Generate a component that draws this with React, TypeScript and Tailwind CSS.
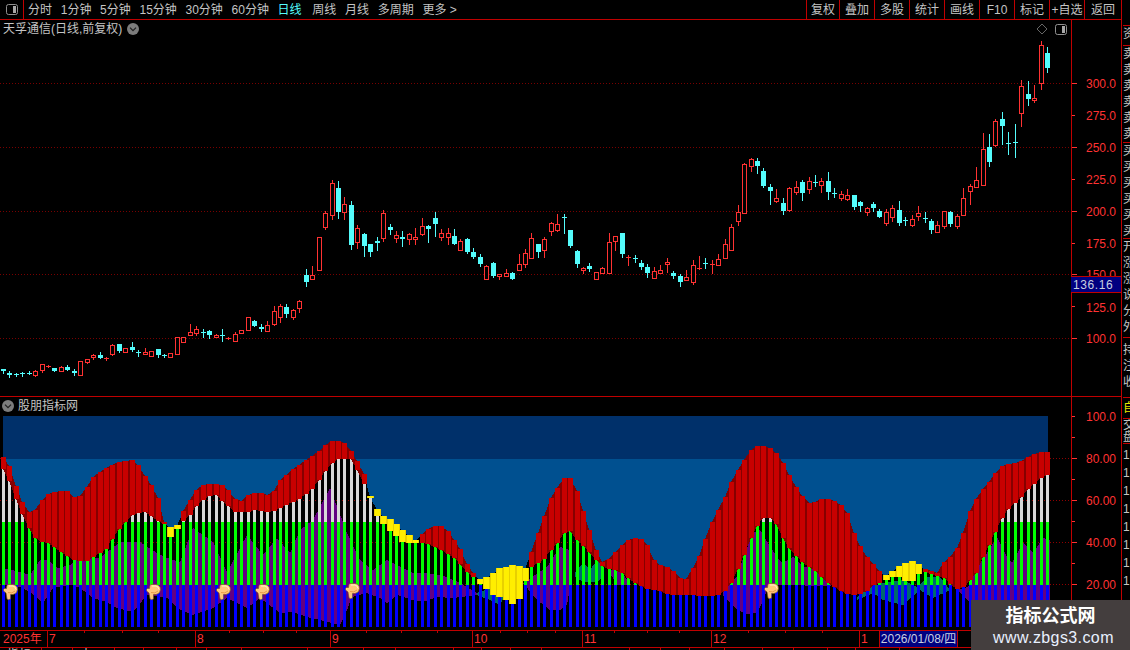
const RED = "#ff3232";
const CYAN = "#54fcfc";
const LINE = "border-[#c00000]";

type Pt = [number, number];

const xOf = (i: number) => Math.floor(3.4 + 6.445 * i);
// values below were read off 3x crops, so they go through this
const zm = (x0: number, y0: number, pts: number[][]): Pt[] =>
  pts.map(([x, y]) => [x0 + x / 3, y0 + y / 3]);

// wick top, body top, body bottom, wick bottom, 1 = up candle
const candleSets: [number, number[][]][] = [
  [300, [
    [207,207,213,219,0],[213,219,225,231,0],[219,222,225,228,0],[216,219,222,228,0],[213,219,220,222,0],
    [210,214,224,228,1],[192,193,209,216,1],[195,198,200,201,1],[204,204,213,213,0],[198,202,212,213,1],
    [195,201,210,210,0],[207,213,219,225,0],[183,184,224,225,1],[177,178,185,189,1],[162,165,171,177,1],
    [156,165,174,174,0],[171,175,178,180,1],[132,136,161,165,1],[132,132,153,156,0],[144,145,155,156,1],
    [126,141,150,153,0],[150,156,159,168,0],[144,156,161,162,1],[153,154,167,168,1],[147,147,165,171,0],
    [162,165,168,171,0],[159,160,170,171,1],[111,112,161,162,1],[111,112,125,126,1],[72,97,104,105,1],
    [78,88,98,105,1],[87,96,99,111,0],[90,93,105,114,0],[102,105,110,111,1],[87,105,108,123,0],
    [111,114,117,117,1],[96,103,122,123,1],[90,91,98,99,1],[51,52,89,90,1],[60,63,78,78,0],
    [72,81,87,93,0],[63,76,92,93,1],[18,34,71,75,1],[12,19,50,66,1],[12,21,42,51,0],
    [27,31,50,57,1],[0,4,23,36,1],
  ]],
  [170, [
    [297,315,335,347,0],[288,316,326,327,1],[202,202,299,299,1],[124,130,172,178,1],[30,40,134,147,1],
    [33,54,126,144,0],[82,103,127,147,1],[93,105,224,237,0],[165,175,215,234,1],[189,192,228,258,0],
    [222,222,246,258,0],[201,213,219,240,0],[120,130,203,213,1],[162,171,180,192,0],[183,195,203,216,1],
    [183,201,207,228,0],[189,193,208,222,1],[174,202,208,222,1],[144,169,191,195,1],[165,168,177,216,0],
    [126,144,162,198,0],[177,190,200,210,1],[174,190,200,222,1],[177,198,222,222,0],[207,214,239,240,1],
    [204,207,246,249,0],[234,246,261,264,0],[252,261,282,288,0],[285,289,326,327,1],[276,279,318,321,0],
    [312,312,318,327,1],[297,309,317,318,1],[306,309,327,327,0],[252,283,299,300,1],[237,250,281,291,1],
    [189,205,263,264,1],[222,222,246,261,0],[201,208,239,261,1],[156,160,182,195,1],[132,163,179,183,1],
    [132,141,144,189,0],[180,180,228,231,0],[240,243,282,291,0],[291,294,300,309,1],[279,288,297,303,0],
    [306,307,326,327,1],
  ]],
  [150, [
    [351,355,368,369,1],[249,277,368,369,1],[258,259,272,300,1],[249,249,312,321,0],[315,321,323,345,1],
    [315,324,327,336,0],[330,339,351,357,0],[342,351,369,381,0],[351,364,383,384,1],[345,361,368,369,1],
    [324,336,342,366,1],[363,369,378,384,0],[372,378,396,408,0],[360,382,389,390,1],[330,346,395,402,1],
    [318,354,356,357,1],[324,339,342,354,0],[330,342,344,369,1],[312,328,344,345,1],[267,283,323,324,1],
    [222,232,299,300,1],[165,187,212,225,1],[40,43,188,189,1],[24,27,47,63,1],[24,33,48,69,0],
    [54,63,108,111,0],[102,111,123,162,0],[117,145,153,156,1],[144,159,183,192,0],[111,115,179,184,1],
    [93,112,125,132,1],[90,96,129,150,0],[81,94,116,129,1],[75,96,99,108,0],[84,94,104,126,1],
    [66,93,126,147,0],[114,129,132,141,0],[123,133,143,150,1],[117,136,146,150,1],[135,135,171,177,0],
    [153,156,168,183,0],[171,175,185,195,1],[156,162,174,183,0],[177,183,201,201,0],
  ]],
  [40, [
    [507,517,548,555,1],[495,505,530,543,1],[483,510,549,555,0],[531,540,543,555,0],[525,538,554,558,1],
    [498,520,527,540,1],[516,534,537,546,0],[537,543,570,579,0],[543,556,575,576,1],[513,514,557,564,1],
    [513,516,552,558,0],[522,529,557,564,1],[444,475,524,525,1],[432,439,452,492,1],[381,421,440,441,1],
    [279,328,434,435,1],[282,321,366,378,0],[237,244,314,318,1],[216,237,258,312,0],[276,309,312,342,0],
    [252,306,309,351,0],[120,139,218,258,1],[123,162,177,195,0],[135,175,181,186,1],[3,16,130,147,1],
    [21,39,84,96,0],
  ]],
];

const candles = candleSets.flatMap(([y0, rows]) =>
  rows.map((r) => ({
    hi: Math.round(y0 + r[0] / 3),
    top: Math.round(y0 + r[1] / 3),
    bot: Math.round(y0 + r[2] / 3),
    lo: Math.round(y0 + r[3] / 3),
    up: r[4] === 1,
  }))
);

const topCurve: Pt[] = [
  ...zm(0, 395, [[0,185],[20,190],[30,222],[45,265],[60,310],[80,350],[100,350],[115,335],[135,300],[175,287],[210,290],[225,310],[250,300],[270,255],[290,237],[330,212],[365,197],[405,195],[430,235],[460,280],[480,322],[490,380],[500,388],[540,360],[560,335],[580,295],[600,272],[640,265],[675,270],[700,310],[720,322],[740,300],[770,292],[800,300],[820,290],[839,258]]),
  ...zm(280, 420, [[0,180],[30,155],[70,125],[110,100],[145,63],[185,63],[215,95],[235,130],[260,175],[265,215],[418,348],[455,318],[495,318],[515,350],[535,378],[555,420],[575,455],[590,470],[748,410],[765,360],[785,310],[805,250],[825,210],[839,195]]),
  ...zm(560, 420, [[0,190],[5,172],[40,175],[65,260],[90,340],[120,425],[140,425],[160,400],[195,365],[215,353],[255,360],[275,410],[295,435],[330,445],[355,470],[375,483],[395,450],[415,415],[445,330],[465,285],[490,245],[505,200],[525,165],[545,130],[565,100],[585,77],[625,80],[660,110],[680,150],[700,190],[735,240],[755,257],[775,238],[810,235],[839,255]]),
  ...zm(840, 420, [[0,253],[15,258],[30,310],[55,370],[75,405],[110,445],[130,465],[245,450],[260,447],[280,455],[298,460],[305,430],[320,420],[345,395],[360,370],[380,298],[400,250],[420,215],[440,195],[460,165],[480,140],[500,132],[530,130],[550,118],[590,97],[630,97]]),
];

const botCurve: Pt[] = [
  ...zm(0, 395, [[0,205],[20,240],[40,290],[60,345],[80,385],[100,425],[120,440],[150,445],[180,470],[220,495],[260,500],[290,480],[320,460],[350,410],[370,385],[400,355],[440,352],[470,375],[490,388],[540,385],[570,360],[590,330],[620,305],[645,297],[680,330],[700,350],[740,353],[765,345],[800,350],[839,345]]),
  ...zm(280, 420, [[0,265],[30,250],[70,230],[100,205],[130,160],[165,117],[215,117],[240,170],[265,215],[418,366],[455,376],[495,395],[530,420],[555,450],[575,470],[590,475],[748,444],[790,420],[810,395],[839,360]]),
  ...zm(560, 420, [[0,380],[10,340],[30,333],[60,370],[90,400],[120,435],[140,445],[180,455],[220,485],[240,497],[260,508],[300,513],[330,525],[370,525],[415,527],[450,530],[490,520],[510,495],[530,455],[550,410],[570,360],[590,320],[610,293],[630,295],[650,315],[680,375],[720,420],[760,450],[800,485],[820,500],[839,510]]),
  ...zm(840, 420, [[0,510],[15,520],[40,525],[75,520],[95,497],[115,490],[130,480],[245,462],[260,455],[280,465],[300,470],[318,478],[335,498],[360,510],[385,488],[410,455],[430,410],[450,370],[470,325],[490,285],[510,260],[530,245],[560,210],[600,175],[630,160]]),
];

// yellow blocks: index -> top, bottom
const yellow: Record<number, Pt> = {
  26: [527, 537], 27: [525, 529], 57: [496, 498], 58: [509, 516], 59: [516, 524], 60: [519, 531],
  61: [524, 536], 62: [530, 542], 63: [535, 543], 64: [540, 543], 74: [579, 584], 75: [577, 589],
  76: [573, 595], 77: [568, 597], 78: [567, 600], 79: [565, 604], 80: [566, 599], 81: [568, 581],
  137: [575, 580], 138: [571, 577], 139: [566, 577], 140: [563, 581], 141: [561, 581], 142: [564, 574],
};
const redRanges: Pt[] = [[0, 25], [28, 56], [65, 73], [82, 136], [143, 162]];

function interp(curve: Pt[], x: number) {
  if (x <= curve[0][0]) return curve[0][1];
  for (let k = 1; k < curve.length; k++) {
    if (x <= curve[k][0]) {
      const [x0, y0] = curve[k - 1];
      const [x1, y1] = curve[k];
      return y0 + ((y1 - y0) * (x - x0)) / Math.max(x1 - x0, 0.01);
    }
  }
  return curve[curve.length - 1][1];
}

const cols = Array.from({ length: 163 }, (_, i) => {
  const cx = xOf(i);
  const y = yellow[i];
  return {
    i,
    cx,
    top: y ? y[0] : Math.round(interp(topCurve, cx)),
    bot: y ? y[1] : Math.round(interp(botCurve, cx)),
    isYellow: !!y,
  };
});

const purple: Pt[][] = [
  [[3,568],[20,572],[30,575],[40,560],[48,560],[58,568],[70,565],[78,558],[100,558],[120,542],[140,542],[157,553],[167,558],[180,562],[193,528],[213,542],[227,572],[247,535],[263,555],[277,538],[290,553],[300,530],[313,520],[330,488],[347,533],[360,560],[373,570],[387,560],[413,573],[427,573],[447,577],[460,583],[477,593],
   [477,595],[453,598],[437,597],[423,602],[413,600],[397,595],[387,603],[380,598],[367,593],[352,597],[347,610],[340,625],[320,620],[307,617],[293,612],[280,613],[260,598],[247,608],[227,598],[213,608],[193,615],[177,608],[167,598],[147,595],[133,612],[117,608],[107,602],[93,598],[80,588],[72,585],[53,588],[43,603],[30,592],[20,587],[3,585]],
  [[523,583],[547,567],[560,547],[570,550],[570,587],[567,605],[560,610],[550,610],[537,600]],
  [[610,570],[620,570],[627,580],[627,585],[617,585],[610,573]],
  [[723,593],[730,583],[737,577],[745,553],[753,533],[760,530],[768,543],[777,557],[782,563],[793,557],[803,567],[813,568],[827,583],[832,586],[777,585],[767,590],[762,603],[757,613],[747,614],[737,610],[723,595]],
  [[957,590],[968,587],[977,567],[987,553],[997,537],[1007,557],[1012,563],[1023,543],[1033,553],[1043,538],[1050,540],[1050,618],[990,615],[972,605],[967,600]],
];
const teal: Pt[][] = [
  [[477,593],[485,590],[495,587],[505,595],[500,605],[490,600],[477,595]],
  [[575,573],[583,563],[590,570],[597,560],[603,567],[603,577],[597,582],[583,582],[575,577]],
  [[857,597],[870,587],[883,583],[903,580],[917,587],[927,577],[940,577],[950,590],[933,598],[920,590],[903,605],[883,600],[873,593],[857,600]],
];
const poly = (pts: Pt[]) => pts.map((p) => p.join(",")).join(" ");

const hands: Pt[] = [[3, 584], [146, 584], [216, 584], [255, 584], [345, 583], [764, 583]];

function Hand({ x, y }: { x: number; y: number }) {
  return (
    <g transform={`translate(${x} ${y})`} shapeRendering="auto">
      <path
        d="M5 .5H10Q14.5 1 14.5 5.5Q14 10 10 10.5H7.5V15Q5.5 16.5 4 15L3 9L.5 7Q0 5 1.5 4.5H3.5Q3.5 1 5 .5Z"
        fill="#ffc67c"
        stroke="#6b4a20"
        strokeWidth=".6"
      />
      <path d="M6 2H10Q12.5 2.5 13 5.5" fill="none" stroke="#fff0d0" strokeWidth="1" />
      <path d="M5 8.5Q9 10 12 7" fill="none" stroke="#e89a48" strokeWidth="1" />
    </g>
  );
}

function PriceChart() {
  return (
    <svg width={1071} height={376} viewBox="0 20 1071 376" shapeRendering="crispEdges" className="block">
      {[83, 147, 211, 274, 338].map((y) => (
        <line key={y} x1={0} x2={1071} y1={y + 0.5} y2={y + 0.5} stroke="#780000" strokeDasharray="1 2" />
      ))}
      {candles.map((c, i) => {
        const cx = xOf(i);
        const color = c.up ? RED : CYAN;
        const h = c.bot - c.top;
        return (
          <g key={i}>
            <line x1={cx + 0.5} x2={cx + 0.5} y1={c.hi} y2={c.lo + 1} stroke={color} />
            {c.up && h >= 2 ? (
              <rect x={cx - 1.5} y={c.top + 0.5} width={4} height={h} fill="#000" stroke={color} />
            ) : (
              <rect x={cx - 2} y={c.top} width={5} height={Math.max(h, 1)} fill={color} />
            )}
          </g>
        );
      })}
    </svg>
  );
}

function IndicatorChart() {
  const bluePts: Pt[] = [
    [3, 459],
    [3, cols[0].top],
    ...cols.map((c): Pt => [c.cx, Math.max(c.top + 1, 459)]),
    [1048, cols[162].top],
    [1048, 459],
  ];
  return (
    <svg width={1071} height={233} viewBox="0 397 1071 233" shapeRendering="crispEdges" className="block">
      {[458, 500, 542, 584].map((y) => (
        <line key={y} x1={0} x2={1071} y1={y + 0.5} y2={y + 0.5} stroke="#900000" strokeDasharray="1 2" />
      ))}
      <rect x={3} y={416} width={1045} height={43} fill="#00306a" />
      <polygon points={poly(bluePts)} fill="#005090" />
      {purple.map((p, i) => (
        <polygon key={i} points={poly(p)} fill="#640082" />
      ))}
      {teal.map((p, i) => (
        <polygon key={i} points={poly(p)} fill="#006a6e" />
      ))}
      {cols.map((c) => {
        const g = Math.max(c.bot, 522);
        const b = Math.max(c.bot, 585);
        return (
          <g key={c.i}>
            {c.bot < 522 && <rect x={c.cx - 1} y={c.bot} width={3} height={522 - c.bot} fill="#d8d8d8" />}
            {g < 585 && <rect x={c.cx - 1} y={g} width={3} height={585 - g} fill="#00ff00" />}
            <rect x={c.cx - 1} y={b} width={3} height={627 - b} fill="#0000ff" />
          </g>
        );
      })}
      {redRanges.map(([a, b]) => {
        const seg = cols.slice(a, b + 1);
        const pts: Pt[] = [
          ...seg.map((c): Pt => [c.cx, c.top]),
          ...seg.slice().reverse().map((c): Pt => [c.cx, c.bot]),
        ];
        return <polygon key={a} points={poly(pts)} fill="#860000" />;
      })}
      {cols
        .filter((c) => redRanges.some(([a, b]) => c.i >= a && c.i <= b))
        .map((c) => (
          <rect key={c.i} x={c.cx - 2} y={c.top} width={5} height={Math.max(c.bot - c.top, 1)} fill="#c80000" />
        ))}
      {cols
        .filter((c) => c.isYellow)
        .map((c) => (
          <g key={c.i}>
            <rect x={c.cx - 3} y={c.top} width={7} height={c.bot - c.top} fill="#e8d000" />
            <rect x={c.cx - 2} y={c.top} width={5} height={c.bot - c.top} fill="#ffee00" />
          </g>
        ))}
      {hands.map(([x, y]) => (
        <Hand key={x} x={x} y={y} />
      ))}
    </svg>
  );
}

function Axis({
  height,
  y0,
  labels,
  ticks,
}: {
  height: number;
  y0: number;
  labels: [string, number][];
  ticks: [number, number][];
}) {
  return (
    <svg width={49} height={height} viewBox={`1072 ${y0} 49 ${height}`} shapeRendering="crispEdges" className="block">
      {ticks.map(([y, w]) => (
        <line key={y} x1={1072} x2={1072 + w} y1={y + 0.5} y2={y + 0.5} stroke={RED} />
      ))}
      {labels.map(([t, y]) => (
        <text key={t} x={1116} y={y + 4} textAnchor="end" fill={RED} fontSize={12} shapeRendering="auto">
          {t}
        </text>
      ))}
    </svg>
  );
}

function PanelIcon({ className }: { className: string }) {
  return (
    <svg width={12} height={11} viewBox="0 0 12 11" className={className}>
      <rect x={0.5} y={0.5} width={11} height={10} rx={2} fill="#000" stroke="#909090" />
      <rect x={7} y={2} width={3} height={7} fill="#a8a8a8" />
    </svg>
  );
}

function RoundChevron({ className }: { className: string }) {
  return (
    <svg width={12} height={12} viewBox="0 0 12 12" className={className}>
      <circle cx={6} cy={6} r={6} fill="#7c7c7c" />
      <path d="M3 4.6L6 7.6L9 4.6" fill="none" stroke="#202020" strokeWidth={1.3} />
    </svg>
  );
}

const periods = ["分时", "1分钟", "5分钟", "15分钟", "30分钟", "60分钟", "日线", "周线", "月线", "多周期", "更多 >"];
const tools = ["复权", "叠加", "多股", "统计", "画线", "F10", "标记", "+自选", "返回"];
const timeCells: [string, number][] = [
  ["2025年", 47], ["7", 148], ["8", 135], ["9", 142], ["10", 110], ["11", 129], ["12", 148], ["1", 20],
];
const timeTicks = [84, 122, 158, 229, 263, 296, 366, 401, 437, 500, 527, 555, 614, 647, 679, 748, 785, 822];
const bottomCells: [string, number][] = [
  ["指标", 42], ["", 31], ["大", 42], ["", 29], ["", 33], ["", 30], ["", 35], ["", 66], ["", 56], ["", 32], ["", 58],
  ["", 28], ["", 29], ["", 31], ["", 88], ["", 31], ["", 29], ["", 35], ["", 38], ["", 31], ["", 34], ["", 28], ["", 44],
];

function SideCell({ chars, className }: { chars: string[]; className: string }) {
  return (
    <div className={`overflow-hidden border-b ${LINE} ${className}`}>
      {chars.map((c, i) => (
        <div key={i} className="text-[12px] leading-[16px]">
          {c}
        </div>
      ))}
    </div>
  );
}

export default function App() {
  return (
    <div className="relative flex h-[650px] w-[1130px] overflow-hidden bg-black font-['Liberation_Sans','Noto_Sans_CJK_SC',sans-serif] text-[#c4c4c4]">
      <div className={`flex w-[1122px] shrink-0 flex-col border-r ${LINE}`}>
        <div className={`flex h-[20px] shrink-0 items-center border-b ${LINE} text-[12px]`}>
          <div className={`flex h-full w-[24px] items-center justify-center border-r ${LINE}`}>
            <PanelIcon className="block" />
          </div>
          <div className="flex flex-1 gap-[8.7px] pl-[4px]">
            {periods.map((p) => (
              <span key={p} className={p === "日线" ? "text-[#54fcfc]" : p === "周线" ? "ml-[2px]" : ""}>
                {p}
              </span>
            ))}
          </div>
          {tools.map((t) => (
            <div
              key={t}
              className={`flex h-full items-center justify-center border-l ${LINE} ${
                t === "复权" ? "w-[33px]" : t === "返回" ? "w-[37px]" : "w-[35px]"
              }`}
            >
              {t}
            </div>
          ))}
        </div>

        <div className={`relative flex h-[377px] shrink-0 border-b ${LINE}`}>
          <PriceChart />
          <div className={`border-l ${LINE}`}>
            <Axis
              height={376}
              y0={20}
              labels={[
                ["300.0", 84], ["275.0", 116], ["250.0", 148], ["225.0", 180], ["200.0", 212],
                ["175.0", 244], ["150.0", 275], ["125.0", 308], ["100.0", 339],
              ]}
              ticks={[
                [83, 5], [115, 3], [147, 5], [179, 3], [211, 5], [243, 3], [274, 5], [306, 3], [338, 5],
              ]}
            />
          </div>
          <div className="absolute left-[3px] top-[2px] flex items-center gap-[5px] text-[12px] leading-[14px]">
            天孚通信(日线,前复权)
            <RoundChevron className="block" />
          </div>
          <svg width={12} height={12} viewBox="0 0 12 12" className="absolute left-[1036px] top-[3px]">
            <path d="M6 1L11 6L6 11L1 6Z" fill="none" stroke="#666" />
          </svg>
          <PanelIcon className="absolute left-[1055px] top-[4px]" />
          <div
            className={`absolute left-[1071px] top-[256px] flex h-[17px] w-[50px] items-center border-y ${LINE} bg-[#000080] pl-[2px] text-[12px] tracking-[0.6px] text-[#c8d0e0]`}
          >
            136.16
          </div>
        </div>

        <div className={`relative flex h-[234px] shrink-0 border-b ${LINE}`}>
          <IndicatorChart />
          <div className={`border-l ${LINE}`}>
            <Axis
              height={233}
              y0={397}
              labels={[["100.0", 417], ["80.00", 459], ["60.00", 501], ["40.00", 543], ["20.00", 585]]}
              ticks={[
                [416, 3], [437, 3], [458, 5], [479, 3], [500, 5], [521, 3], [542, 5], [563, 3], [584, 5], [605, 3],
              ]}
            />
          </div>
          <div className="absolute left-[2px] top-[2px] flex items-center gap-[4px] text-[12px] leading-[14px]">
            <RoundChevron className="block" />
            股朋指标网
          </div>
        </div>

        <div className={`relative flex h-[17px] shrink-0 border-b ${LINE} text-[12px] text-[#ff3232]`}>
          {timeCells.map(([t, w], i) => (
            <div
              key={t}
              style={{ width: w }}
              className={`flex items-center ${i > 0 ? `border-l pl-[1px] ${LINE}` : "pl-[3px]"}`}
            >
              {t}
            </div>
          ))}
          <div className={`flex w-[79px] items-center justify-center border-x ${LINE} bg-[#000080] text-[#c8d0e0]`}>
            2026/01/08/四
          </div>
          <div className="flex-1" />
          <div className={`w-[50px] border-l ${LINE}`} />
          <svg width={1071} height={3} className="absolute left-0 top-0">
            {timeTicks.map((x) => (
              <rect key={x} x={x} y={0} width={1} height={2} fill="#c00000" />
            ))}
          </svg>
        </div>

        <div className="flex h-[3px] overflow-hidden text-[12px] leading-[14px]">
          {bottomCells.map(([t, w], i) => (
            <div key={i} style={{ width: w }} className={`shrink-0 border-r pl-[7px] ${LINE}`}>
              {t}
            </div>
          ))}
        </div>
      </div>

      <div className="flex w-[8px] shrink-0 flex-col pl-[1px]">
        <div className={`h-[26px] shrink-0 border-b ${LINE}`} />
        <SideCell chars={["资"]} className="h-[20px] shrink-0" />
        <SideCell chars={["卖", "卖", "卖", "卖", "卖", "卖"]} className="h-[97px] shrink-0" />
        <SideCell chars={["买", "买", "买", "买", "买", "买"]} className="h-[96px] shrink-0" />
        <SideCell chars={["开", "涨", "涨", "说", "分", "外"]} className="h-[99px] shrink-0" />
        <SideCell chars={["持", "注", "收"]} className="h-[60px] shrink-0 pt-[4px]" />
        <SideCell chars={["自"]} className="h-[21px] shrink-0 pt-[2px] text-[#e8e800]" />
        <div className={`h-[25px] shrink-0 overflow-hidden border-b ${LINE} text-[12px] leading-[12px]`}>
          <div>交</div>
          <div>盘</div>
        </div>
        <div className="pt-[2px] text-[12px] leading-[18px]">
          {Array.from({ length: 8 }, (_, i) => (
            <div key={i}>1</div>
          ))}
        </div>
      </div>

      <div className="absolute bottom-0 right-0 flex h-[50px] w-[159px] flex-col items-center bg-[#443e3e] text-white">
        <div className="mt-[4px] text-[18px] font-bold leading-[24px]">指标公式网</div>
        <div className="ml-[6px] text-[16px] leading-[20px] tracking-[0.4px] text-[#e8f0ff]">www.zbgs3.com</div>
      </div>
    </div>
  );
}
